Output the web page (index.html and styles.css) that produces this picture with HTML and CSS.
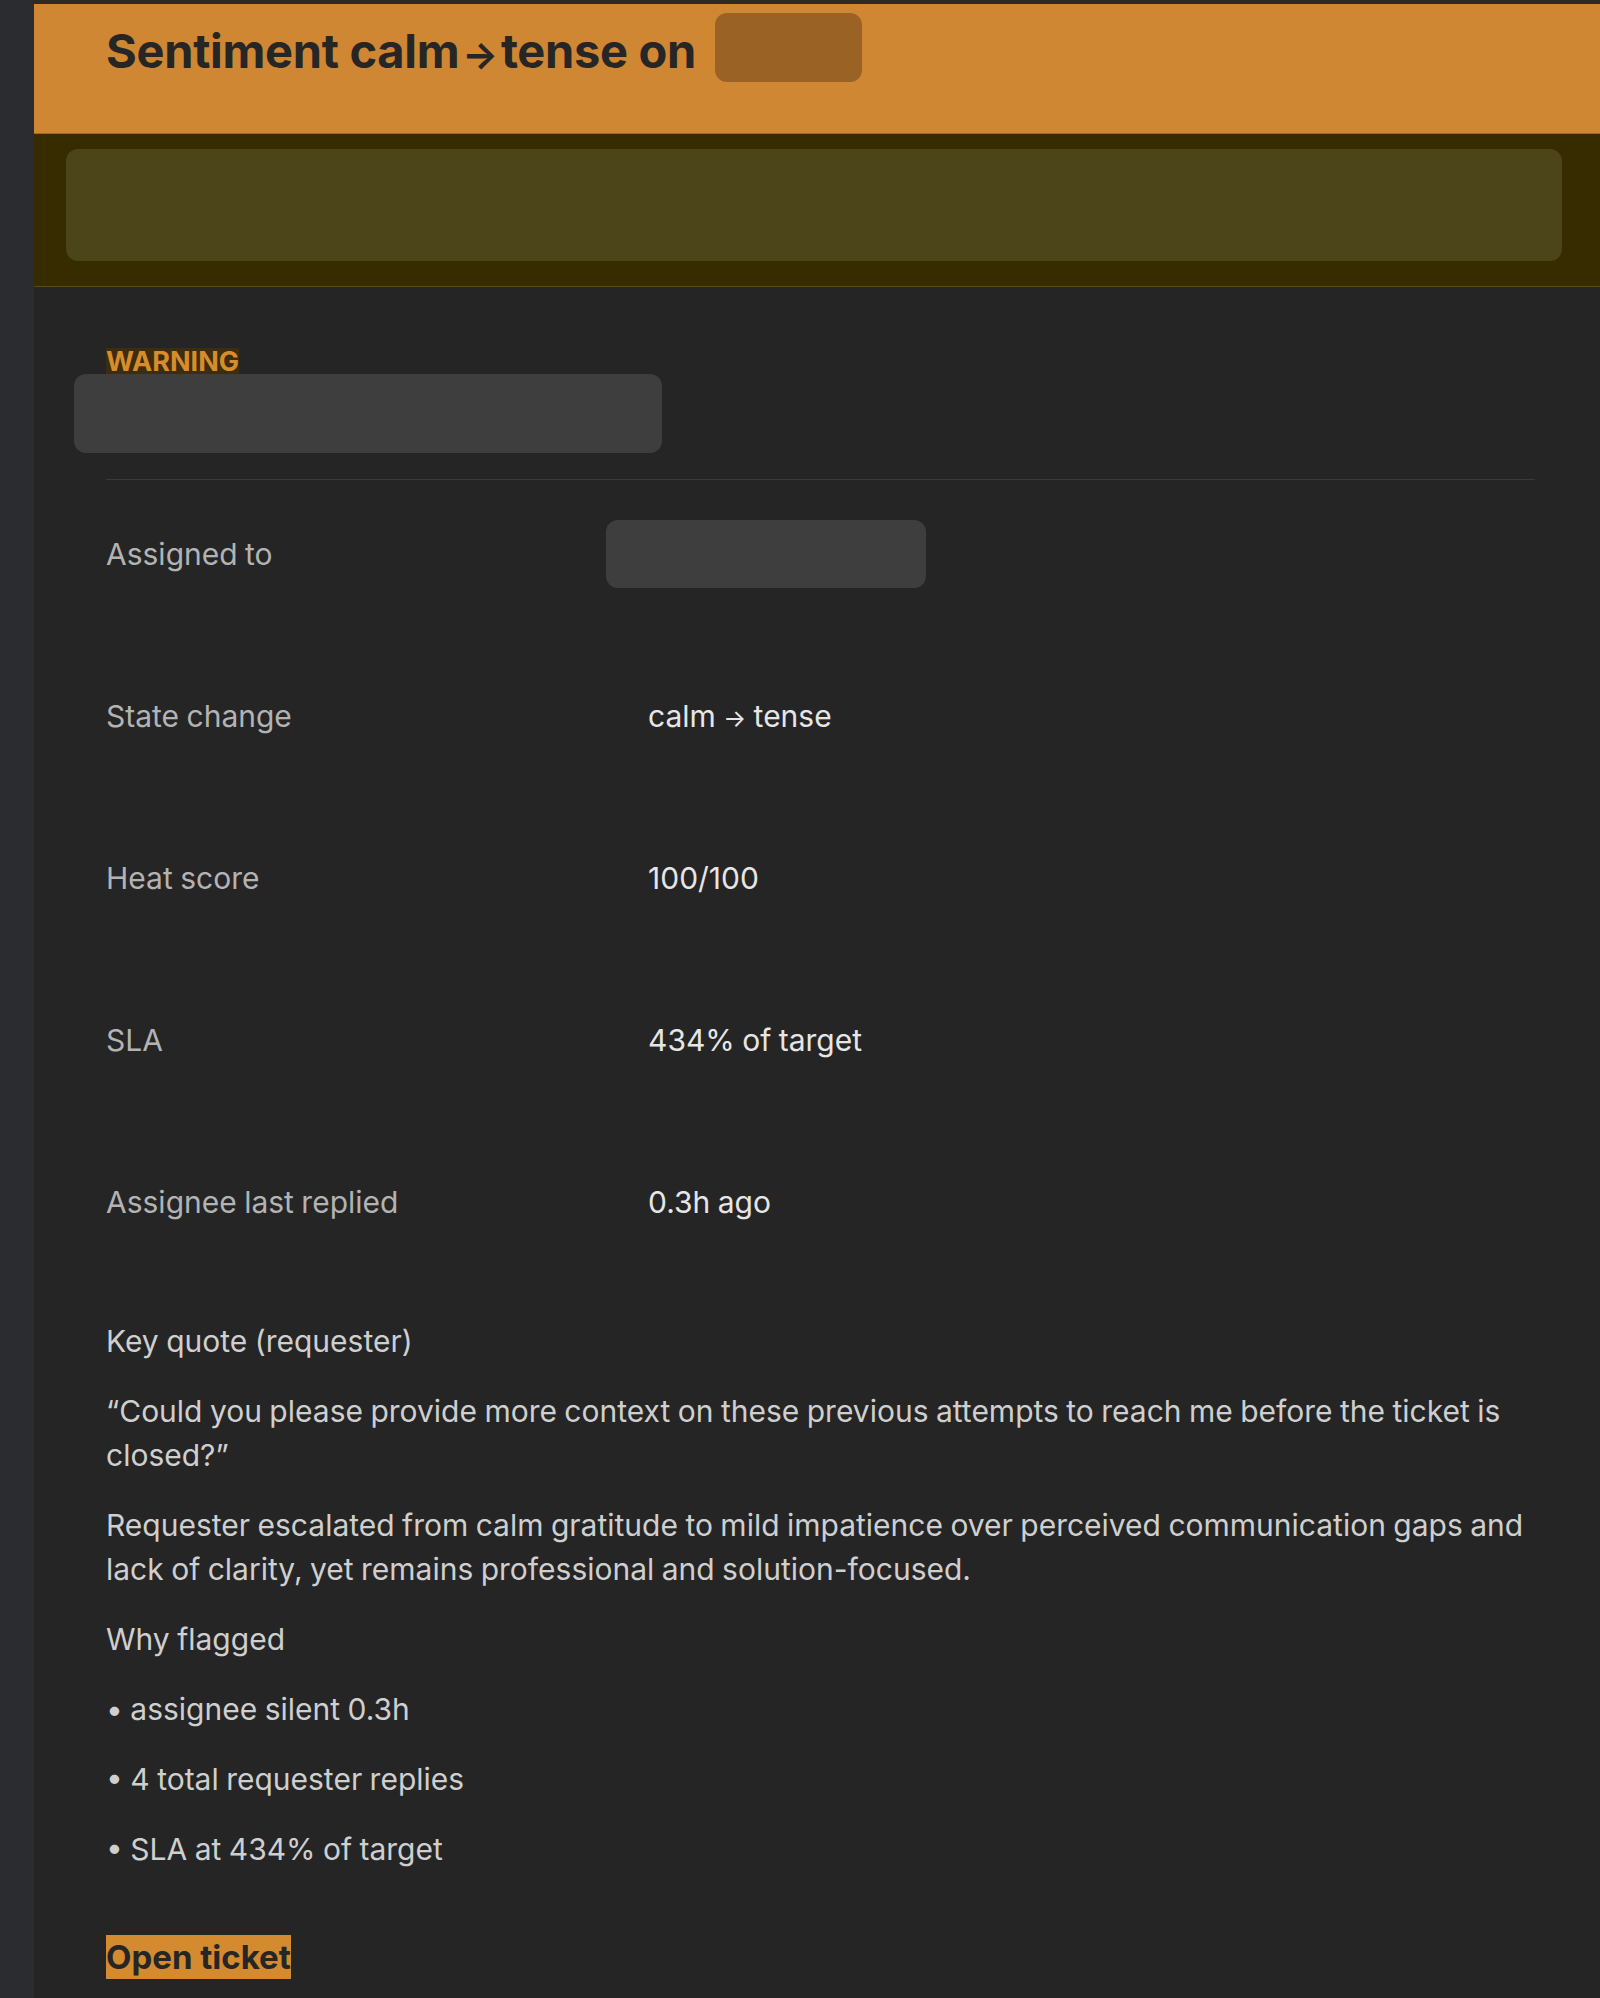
FILE: index.html
```html
<!DOCTYPE html>
<html lang="en">
<head>
    <meta charset="UTF-8">
    <meta name="viewport" content="width=device-width, initial-scale=1.0">
    <title>Sentiment alert</title>
    <link rel="stylesheet" href="styles.css">
</head>
<body>
    <div class="panel">
        <div class="alert-head">
            <h1>Sentiment calm<span class="arrow">→</span>tense on <span class="redact redact-head"></span></h1>
        </div>
        <div class="alert-band">
            <div class="band-box"></div>
        </div>

        <div class="content">
            <span class="level">WARNING</span>
            <div class="redact redact-title"></div>
            <hr class="divider">

            <div class="facts">
                <div class="fact"><span class="label">Assigned to</span><span class="value"><span class="redact redact-user"></span></span></div>
                <div class="fact"><span class="label">State change</span><span class="value">calm <span class="arrow">→</span> tense</span></div>
                <div class="fact"><span class="label">Heat score</span><span class="value">100/100</span></div>
                <div class="fact"><span class="label">SLA</span><span class="value">434% of target</span></div>
                <div class="fact"><span class="label">Assignee last replied</span><span class="value">0.3h ago</span></div>
            </div>

            <p>Key quote (requester)</p>
            <p>“Could you please provide more context on these previous attempts to reach me before the ticket is closed?”</p>
            <p>Requester escalated from calm gratitude to mild impatience over perceived communication gaps and lack of clarity, yet remains professional and solution-focused.</p>
            <p>Why flagged</p>
            <p>• assignee silent 0.3h</p>
            <p>• 4 total requester replies</p>
            <p>• SLA at 434% of target</p>

            <a class="open-btn" href="#">Open ticket</a>
        </div>
    </div>
</body>
</html>
```

FILE: styles.css
```css
body { margin: 0; background-color: #2b2c30; font-family: Inter, "Liberation Sans", sans-serif; }
.panel { margin-left: 34px; min-height: 1998px; background-color: #252525; border-top: 4px solid #2d2a24; box-sizing: border-box; }

.alert-head { background-color: #cf8733; height: 130px; padding: 9px 0 0 72px; box-sizing: border-box; border-bottom: 1px solid #9c6a26; }
.alert-head h1 { margin: 0; font-size: 47px; line-height: 58px; font-weight: 700; color: #262626; letter-spacing: -0.3px; }
.arrow { font-size: 0.8em; line-height: 1; }
.alert-head .arrow { margin: 0 3px; }
.redact { display: inline-block; border-radius: 12px; }
.redact-head { background-color: #9a6224; width: 147px; height: 69px; vertical-align: -14px; margin-left: 8px; }

.alert-band { background-color: #372b00; padding: 15px 38px 25px 32px; border-bottom: 1px solid #5c4a16; }
.band-box { background-color: #4c4519; height: 112px; border-radius: 12px; }

.content { padding: 61px 65px 0 72px; color: #cfcfcf; font-size: 30px; line-height: 44px; word-spacing: -1px; }
.level { display: block; width: fit-content; background-color: #3b2d0e; color: #d98c2b; font-weight: 700; font-size: 27px; line-height: 28px; }
.redact-title { display: block; background-color: #3e3e3e; width: 588px; height: 79px; margin: -2px 0 0 -32px; }
.divider { border: none; border-top: 1px solid #3a3a3a; margin: 26px 0 0 0; }

.facts { margin-bottom: 29px; }
.fact { display: grid; grid-template-columns: 542px 1fr; height: 162px; box-sizing: border-box; padding-top: 52px; }
.label { color: #b3b3b3; }
.value { color: #e6e6e6; }
.redact-user { background-color: #3e3e3e; width: 320px; height: 68px; margin: -12px 0 -12px -42px; vertical-align: top; }

.content p { margin: 0 0 26px 0; }
.open-btn { display: inline-block; margin-top: 38px; background-color: #d48a2f; color: #262626; font-weight: 700; font-size: 33px; line-height: 44px; word-spacing: 0; text-decoration: none; }
```
